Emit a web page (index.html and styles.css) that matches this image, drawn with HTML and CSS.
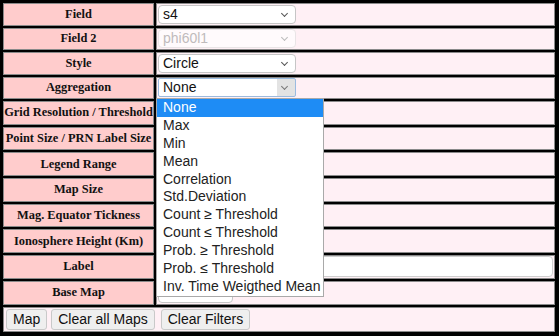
FILE: index.html
```html
<!DOCTYPE html>
<html lang="en">
<head>
    <meta charset="UTF-8">
    <title>Map Options</title>
    <link rel="stylesheet" href="styles.css">
</head>
<body>
    <div class="panel">
        <table class="form-table">
            <colgroup>
                <col class="col-label">
                <col class="col-value">
            </colgroup>
            <tr class="sel-row">
                <td class="label">Field</td>
                <td class="value"><span class="select-wrap"><select class="field-select"><option>s4</option></select></span></td>
            </tr>
            <tr class="sel-row">
                <td class="label">Field 2</td>
                <td class="value"><span class="select-wrap disabled"><select class="field-select" disabled><option>phi60l1</option></select></span></td>
            </tr>
            <tr class="sel-row">
                <td class="label">Style</td>
                <td class="value"><span class="select-wrap"><select class="field-select"><option>Circle</option></select></span></td>
            </tr>
            <tr class="sel-row">
                <td class="label">Aggregation</td>
                <td class="value"><span class="select-wrap is-open"><select class="field-select"><option>None</option></select></span></td>
            </tr>
            <tr class="input-row">
                <td class="label">Grid Resolution / Threshold</td>
                <td class="value"><input type="text" class="small-input"></td>
            </tr>
            <tr class="input-row">
                <td class="label">Point Size / PRN Label Size</td>
                <td class="value"><input type="text" class="small-input"></td>
            </tr>
            <tr class="input-row">
                <td class="label">Legend Range</td>
                <td class="value"><input type="text" class="small-input"></td>
            </tr>
            <tr class="input-row">
                <td class="label">Map Size</td>
                <td class="value"><input type="text" class="small-input"></td>
            </tr>
            <tr class="input-row">
                <td class="label">Mag. Equator Tickness</td>
                <td class="value"><input type="text" class="small-input"></td>
            </tr>
            <tr class="input-row">
                <td class="label">Ionosphere Height (Km)</td>
                <td class="value"><input type="text" class="small-input"></td>
            </tr>
            <tr class="input-row">
                <td class="label">Label</td>
                <td class="value"><input type="text" class="wide-input"></td>
            </tr>
            <tr class="input-row">
                <td class="label">Base Map</td>
                <td class="value"><span class="select-wrap base-wrap"><select class="field-select base-select"><option>Street</option></select></span></td>
            </tr>
            <tr class="button-row">
                <td class="value" colspan="2">
                    <div class="buttons">
                        <button>Map</button>
                        <button>Clear all Maps</button>
                        <button class="gap-left">Clear Filters</button>
                    </div>
                </td>
            </tr>
        </table>

        <!-- open dropdown of the Aggregation select -->
        <ul class="agg-list">
            <li class="active">None</li>
            <li>Max</li>
            <li>Min</li>
            <li>Mean</li>
            <li>Correlation</li>
            <li>Std.Deviation</li>
            <li>Count &ge; Threshold</li>
            <li>Count &le; Threshold</li>
            <li>Prob. &ge; Threshold</li>
            <li>Prob. &le; Threshold</li>
            <li>Inv. Time Weigthed Mean</li>
        </ul>
    </div>
</body>
</html>
```

FILE: styles.css
```css
/* Page */
html, body {
    margin: 0;
    padding: 0;
    height: 100%;
    background: #000;
    overflow: hidden;
    font-family: "Liberation Sans", Arial, sans-serif;
}

.panel {
    position: relative;
    padding: 1px 0 0 1px;
}

/* Form table */
.form-table {
    border-spacing: 2px;
    table-layout: fixed;
    width: 556px;
}

.col-label {
    width: 151px;
}

.col-value {
    width: 399px;
}

.form-table td {
    border: 1px solid #8a8a8a;
    padding: 0 1px;
    overflow: hidden;
}

.sel-row {
    height: 22.5px;
}

.input-row {
    height: 23.7px;
}

.button-row {
    height: 25px;
}

.form-table td.label {
    background: #ffcccc;
    color: #111;
    padding: 0;
    font-family: "Liberation Serif", "Times New Roman", serif;
    font-weight: bold;
    font-size: 12.4px;
    text-align: center;
    white-space: nowrap;
}

.value {
    background: #fff0f5;
}

/* Selects, drawn flat with a small chevron */
.select-wrap {
    position: relative;
    display: block;
    width: 138px;
}

.select-wrap::after {
    content: "";
    position: absolute;
    right: 9px;
    top: 6px;
    width: 4px;
    height: 4px;
    border-right: 1px solid #555;
    border-bottom: 1px solid #555;
    transform: rotate(45deg);
    pointer-events: none;
}

.select-wrap.disabled::after {
    border-color: #bbb;
}

.field-select {
    display: block;
    width: 100%;
    height: 19px;
    margin: 0;
    padding: 0 0 0 4px;
    -webkit-appearance: none;
    appearance: none;
    background: #fff;
    border: 1px solid #c6c6c6;
    border-radius: 4px;
    color: #111;
    font-family: "Liberation Sans", Arial, sans-serif;
    font-size: 14px;
    line-height: 17px;
}

.field-select:disabled {
    color: #a5a5a5;
    border-color: #e0e0e0;
    background: #fff;
}

/* open select: focused box with a hovered arrow area */
.select-wrap.is-open .field-select {
    border-color: #9bbbe0;
    background: linear-gradient(to right, #fff 118px, #e3e3e3 118px);
    border-radius: 2px;
}

.select-wrap.is-open::after {
    border-color: #777;
}

.base-wrap {
    width: 75px;
}

.base-select {
    height: 21px;
    line-height: 19px;
}

.small-input {
    display: block;
    width: 60px;
    height: 21px;
    box-sizing: border-box;
    margin: 0;
    border: 1px solid #c8c8c8;
    border-radius: 4px;
}

.wide-input {
    display: block;
    width: 395px;
    height: 21px;
    box-sizing: border-box;
    margin: 0;
    border: 1px solid #cfcfcf;
    border-radius: 4px;
    background: #fff;
}

/* Action buttons */
.buttons {
    display: flex;
    gap: 4px;
    padding: 0 0 0 1px;
}

.buttons button {
    height: 21px;
    padding: 0 6px;
    margin: 0;
    background: #efefef;
    border: 1px solid #c9c9c9;
    border-radius: 3px;
    color: #111;
    font-family: "Liberation Sans", Arial, sans-serif;
    font-size: 14px;
}

.buttons .gap-left {
    margin-left: 2px;
}

/* Aggregation dropdown popup */
.agg-list {
    position: absolute;
    left: 156px;
    top: 98px;
    width: 168px;
    box-sizing: border-box;
    margin: 0;
    padding: 0;
    list-style: none;
    background: #fff;
    border: 1px solid #a9a9a9;
    font-size: 14px;
    color: #222;
}

.agg-list li {
    height: 17.9px;
    line-height: 17.9px;
    padding-left: 6px;
    white-space: nowrap;
}

.agg-list li.active {
    background: #1e8cf5;
    color: #fff;
}
```
